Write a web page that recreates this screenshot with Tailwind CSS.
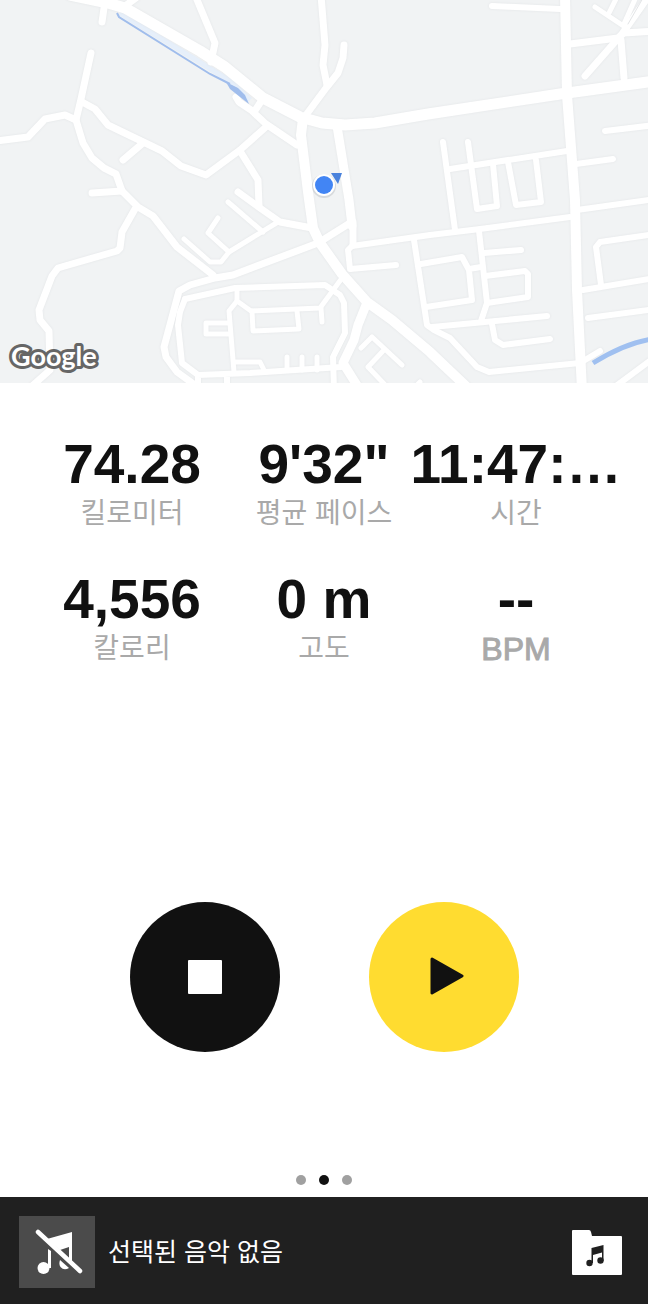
<!DOCTYPE html>
<html lang="ko">
<head>
  <meta charset="UTF-8" />
  <meta name="viewport" content="width=device-width, initial-scale=1" />
  <title>러닝</title>
  <script src="https://cdn.jsdelivr.net/npm/@tailwindcss/browser@4"></script>
</head>
<body class="min-h-screen flex flex-col bg-white text-[#111111] font-['Liberation_Sans','Noto_Sans_CJK_KR',sans-serif]">
  <!-- Map -->
  <section class="h-[383px] shrink-0 bg-[#f1f3f4] overflow-hidden" aria-label="지도">
    <svg class="w-full h-full" viewBox="0 0 648 383" preserveAspectRatio="xMidYMid slice" fill="none">
      <path d="M120 13L232 82L250 100" stroke="#e6effa" stroke-width="5" />
      <g class="drop-shadow-[0_0_1px_#e2e4e6]" stroke="#fff" stroke-linecap="round" stroke-linejoin="round">
        <!-- main roads -->
        <g stroke-width="11">
          <path d="M70 -5L108 3L125 8L200 51L225 67L263 98L300 117L322 123L345 125L375 123L428 114L560 94L655 81" />
          <path d="M565 -5L567 95L575 200L577 290L582 390" stroke-width="10" />
          <path d="M303 118L301 135L308 192L313 228L320 243L342 274L367 302L392 320L430 352L470 390" stroke-width="10" />
          <path d="M337 126L349 200L352 226" stroke-width="9" />
          <path d="M366 305L358 325L354 340L343 363L360 390" stroke-width="9" />
        </g>
        <!-- west side -->
        <g stroke-width="7">
          <path d="M104 8L102 22" />
          <path d="M125 6L136 -2" />
          <path d="M91 53L81 99L76 120L83 143L92 158L104 168L116 174L122 191L138 207L153 216L177 247L213 275" />
          <path d="M82 102L95 109L108 125L135 138L162 151L181 166L206 175L240 150L267 126" />
          <path d="M143 143L123 160M92 193L122 191" />
          <path d="M-4 141L28 137L45 119L65 115L76 120" />
          <path d="M135 209L122 232L120 248L117 251L58 268L52 276L39 310L40 320L49 331L50 370L32 386" />
          <path d="M195 -5L215 43L211 62" />
          <path d="M321 -5L325 45L323 65L327 85" />
          <path d="M344 45L343 58L338 73L326 88L306 115" />
          <path d="M236 97L239 102L251 110L266 124L297 145M262 100L254 112" />
          <path d="M240 151L258 180L259 206" />
          <path d="M238 192L260 208L280 222L312 228" />
          <path d="M195 385L177 372L166 357L164 347L179 291L190 285L215 278L233 275L318 243L350 223" />
        </g>
        <g stroke-width="5">
          <path d="M228 202L263 232M218 218L208 233L229 252" />
          <path d="M184 239L210 262L221 262L229 252L278 222" />
        </g>
        <!-- block loop -->
        <g stroke-width="6">
          <path d="M185 299L235 288L325 285L340 295L344 303L345 333L333 357L334 390" />
          <path d="M185 299L180 312L178 325L182 363L198 375L250 373L341 367M198 375L198 390M227 374L227 390" />
        </g>
        <g stroke-width="5">
          <path d="M237 288L237 301L251 311L320 308L342 278" />
          <path d="M237 301L229 311L234 372M229 323L206 323L206 334L230 334" />
          <path d="M252 311L253 331L299 329L297 311M321 308L322 322" />
          <path d="M234 362L260 362L264 370M287 357L287 370M302 357L302 370M317 357L317 370" />
          <path d="M361 348L372 337L402 365M383 351L368 367L388 388M416 386L420 382" />
        </g>
        <!-- east side -->
        <g stroke-width="6">
          <path d="M353 222L353 245" stroke-width="7" />
          <path d="M396 265L350 269L348 250L352 246L430 235L480 229L570 217" />
          <path d="M414 240L427 325L434 330L450 338L477 367L489 372L580 363L600 351" />
          <path d="M421 264L462 257L469 270L472 300L426 307M469 269L481 267" />
          <path d="M432 327L547 316M479 231L487 303L481 321M484 253L521 250" />
          <path d="M485 276L525 271L528 274L528 297L487 303M492 324L495 340L503 345L550 339" />
          <path d="M492 6L560 9M605 131L655 125M576 164L613 159" />
          <path d="M443 142L455 230M468 142L477 209L497 206L493 164" />
          <path d="M508 162L516 205L541 202L536 160M450 169L567 151" />
          <path d="M577 210L655 199M601 285L596 247L600 242L655 234" />
          <path d="M583 290L655 278M588 318L655 309M612 389L655 357" />
        </g>
        <g stroke-width="7">
          <path d="M570 44L618 38L624 33L655 31" />
          <path d="M648 -3L622 34L585 76M621 40L624 78" />
        </g>
        <path d="M595 7L625 27M617 -3L609 13M636 -3L624 24" stroke-width="5" />
        <path d="M643 -2L628 24" stroke="#e3e5e7" stroke-width="1" />
      </g>
      <!-- water -->
      <path d="M117 13L119 17L210 74L230 84" stroke="#a0bdec" stroke-width="2" />
      <path d="M226 82L238 88L245 95L249 104L240 97L230 89Z" fill="#a0bdec" />
      <path d="M593 363Q625 343 652 339" stroke="#a0c0f0" stroke-width="5" />
      <!-- position -->
      <path d="M331 173H342L338 184Z" fill="#4a82dc" />
      <circle cx="324" cy="186" r="12" fill="#8a9099" fill-opacity=".25" />
      <circle cx="324" cy="185" r="11" fill="#fff" />
      <circle cx="324" cy="185" r="9" fill="#4285f4" />
      <text x="11" y="366" class="font-['Lato'] font-bold text-[27px]" fill="#fff" stroke="#666" stroke-width="6" stroke-linejoin="round" paint-order="stroke">Google</text>
    </svg>
  </section>

  <main class="grow flex flex-col items-center">
    <dl class="w-full grid grid-cols-3 gap-y-[35px] px-9 pt-[53px] text-center whitespace-nowrap">
      <div class="flex flex-col-reverse items-center">
        <dt class="text-[28px] leading-[44px] text-[#a9a9a9]">킬로미터</dt>
        <dd class="text-[55px] leading-[56px] font-bold">74.28</dd>
      </div>
      <div class="flex flex-col-reverse items-center">
        <dt class="text-[28px] leading-[44px] text-[#a9a9a9]">평균 페이스</dt>
        <dd class="text-[55px] leading-[56px] font-bold">9'32"</dd>
      </div>
      <div class="flex flex-col-reverse items-center">
        <dt class="text-[28px] leading-[44px] text-[#a9a9a9]">시간</dt>
        <dd class="text-[55px] leading-[56px] font-bold">11:47:…</dd>
      </div>
      <div class="flex flex-col-reverse items-center">
        <dt class="text-[28px] leading-[44px] text-[#a9a9a9]">칼로리</dt>
        <dd class="text-[55px] leading-[56px] font-bold">4,556</dd>
      </div>
      <div class="flex flex-col-reverse items-center">
        <dt class="text-[28px] leading-[44px] text-[#a9a9a9]">고도</dt>
        <dd class="text-[55px] leading-[56px] font-bold">0 m</dd>
      </div>
      <div class="flex flex-col-reverse items-center">
        <dt class="text-[32px] leading-[44px] text-[#a9a9a9] [-webkit-text-stroke:1px_#a9a9a9]">BPM</dt>
        <dd class="text-[55px] leading-[56px] font-bold">--</dd>
      </div>
    </dl>

    <div class="mt-auto mb-[123px] flex gap-[89px]">
      <button type="button" aria-label="정지" class="size-[150px] rounded-full bg-[#111111] flex items-center justify-center">
        <span class="size-[34px] rounded-[1px] bg-white"></span>
      </button>
      <button type="button" aria-label="재개" class="size-[150px] rounded-full bg-[#ffdc30] flex items-center justify-center">
        <svg class="w-[40px] h-[40px]" viewBox="0 0 40 40">
          <path d="M8 2L38 19L8 36Z" fill="#111" stroke="#111" stroke-width="3" stroke-linejoin="round" />
        </svg>
      </button>
    </div>

    <div class="flex gap-[13px] mb-3">
      <span class="size-[10px] rounded-full bg-[#a0a0a0]"></span>
      <span class="size-[10px] rounded-full bg-[#111111]"></span>
      <span class="size-[10px] rounded-full bg-[#a0a0a0]"></span>
    </div>
  </main>

  <!-- Music bar -->
  <footer class="bg-[#202020] text-white flex items-center pt-[19px] pb-4 pl-[19px] pr-[26px]">
    <div class="w-[76px] h-[72px] shrink-0 bg-[#4b4b4b]">
      <svg viewBox="0 0 76 72" class="w-full h-full">
        <g fill="#fff">
          <path d="M28 23L53 16V46L50 43V31L41 34Z" />
          <path d="M29 33L32 35V52H29Z" />
          <circle cx="24.500" cy="52" r="6" />
          <path d="M41 44L50 52Q45 55 41.500 51Q39.500 48 41 44Z" />
        </g>
        <path d="M19 16L61 55" stroke="#fff" stroke-width="4.500" stroke-linecap="round" />
      </svg>
    </div>
    <p class="ml-[13px] text-[25px] leading-9 grow">선택된 음악 없음</p>
    <button type="button" aria-label="음악 선택" class="shrink-0">
      <svg viewBox="0 0 50 45" class="w-[50px] h-[45px]">
        <path d="M1 0H17Q18.500 0 19 2L20 6H49Q50 6 50 7V44Q50 45 49 45H1Q0 45 0 44V1Q0 0 1 0Z" fill="#fff" />
        <g fill="#202020">
          <path d="M19.500 18L31.500 15V31H30V22.500L21 25V33H19.500Z" />
          <circle cx="17.500" cy="33" r="3.200" />
          <circle cx="28.500" cy="30.500" r="3.200" />
        </g>
      </svg>
    </button>
  </footer>
</body>
</html>
